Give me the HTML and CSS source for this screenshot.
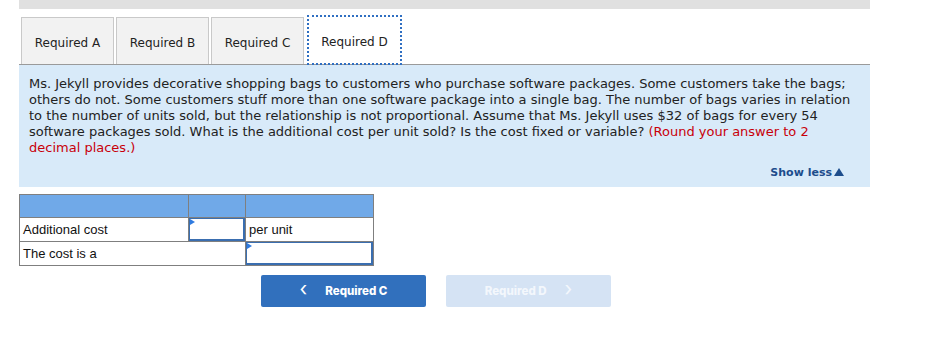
FILE: index.html
```html
<!DOCTYPE html>
<html>
<head>
<meta charset="utf-8">
<link rel="stylesheet" href="styles.css">
</head>
<body>
<div class="topbar"></div>
<div class="tabs">
  <div class="tab">Required A</div>
  <div class="tab">Required B</div>
  <div class="tab">Required C</div>
  <div class="tab active">Required D</div>
</div>
<div class="panel">
  <div class="question">
    <span class="line">Ms. Jekyll provides decorative shopping bags to customers who purchase software packages. Some customers take the bags;</span>
    <span class="line">others do not. Some customers stuff more than one software package into a single bag. The number of bags varies in relation</span>
    <span class="line">to the number of units sold, but the relationship is not proportional. Assume that Ms. Jekyll uses $32 of bags for every 54</span>
    <span class="line">software packages sold. What is the additional cost per unit sold? Is the cost fixed or variable? <span class="red">(Round your answer to 2</span></span>
    <span class="line red">decimal places.)</span>
  </div>
  <div class="showless">Show less<span class="tri"></span></div>
</div>
<table class="grid">
  <colgroup><col class="c1"><col class="c2"><col class="c3"></colgroup>
  <tr class="head"><td></td><td></td><td></td></tr>
  <tr><td>Additional cost</td><td class="inp"><div class="box"></div></td><td>per unit</td></tr>
  <tr><td colspan="2">The cost is a</td><td class="inp"><div class="box"></div></td></tr>
</table>
<div class="nav">
  <button class="btn prev"><span class="chev">&lsaquo;</span>Required C</button>
  <button class="btn next">Required D<span class="chev r">&rsaquo;</span></button>
</div>
</body>
</html>
```
FILE: styles.css
```css
body {
  margin: 0;
  background: #fff;
  font-family: "DejaVu Sans", Verdana, sans-serif;
  color: #222;
}
.topbar {
  margin-left: 19px;
  width: 851px;
  height: 9px;
  background: #e0e0e0;
}
.tabs {
  display: flex;
  margin: 8px 0 0 19px;
  width: 849px;
  padding-left: 2px;
  border-bottom: 1px solid #9a9a9a;
  height: 47px;
}
.tab {
  width: 93px;
  height: 47px;
  box-sizing: border-box;
  border: 1px solid #c9c9c9;
  border-bottom: none;
  background: #f2f2f2;
  margin-right: 2px;
  display: flex;
  align-items: center;
  justify-content: center;
  padding-top: 3px;
  font-size: 12px;
  color: #222;
}
.tab.active {
  background: #fff;
  border: none;
  width: 91px;
  height: 46px;
  margin-left: 3px;
  padding-top: 4px;
  outline: 2px dotted #2f6fc2;
  outline-offset: 0;
}
.panel {
  margin-left: 19px;
  width: 851px;
  height: 122px;
  background: #d8eaf9;
  box-sizing: border-box;
  padding: 11px 10px 0 10px;
}
.question {
  margin: 0;
  font-size: 13px;
  line-height: 16px;
  color: #222;
}
.line {
  display: block;
  white-space: nowrap;
}
.red { color: #c8000a; }
.showless {
  text-align: right;
  margin-top: 10px;
  padding-right: 16px;
  font-size: 11px;
  font-weight: bold;
  color: #1d4d8c;
}
.tri {
  display: inline-block;
  width: 0;
  height: 0;
  margin-left: 2px;
  border-left: 5px solid transparent;
  border-right: 5px solid transparent;
  border-bottom: 8px solid #1d4d8c;
}
.grid {
  margin: 7px 0 0 19px;
  border-collapse: collapse;
  font-family: "Liberation Sans", Arial, sans-serif;
  font-size: 13px;
  color: #111;
  table-layout: fixed;
  width: 354px;
}
.c1 { width: 169px; }
.c2 { width: 57px; }
.c3 { width: 128px; }
.grid td {
  border: 1px solid #7f7f7f;
  height: 23px;
  padding: 0 3px;
  box-sizing: border-box;
}
.grid .head td {
  background: #70a9e8;
}
.grid td.inp {
  padding: 0;
}
.box {
  height: 20px;
  border-style: solid;
  border-width: 1px 2px 2px 1px;
  border-color: #3a6eb0;
  background: #fff;
  position: relative;
}
.box::before {
  content: "";
  position: absolute;
  left: 0;
  top: 0;
  border-left: 5px solid #2f7be0;
  border-top: 3px solid transparent;
  border-bottom: 3px solid transparent;
}
.nav {
  display: flex;
  gap: 20px;
  margin: 9px 0 0 261px;
}
.btn {
  width: 165px;
  height: 32px;
  border: none;
  border-radius: 2px;
  font-family: Inter, "DejaVu Sans", sans-serif;
  font-weight: 800;
  font-size: 11.5px;
  color: #fff;
  display: flex;
  align-items: center;
  justify-content: center;
  padding: 0;
}
.prev { background: #3170bd; }
.next { background: #d5e3f4; color: #f3f7fc; }
.chev {
  font-size: 20px;
  font-weight: 400;
  margin-right: 18px;
  line-height: 1;
  position: relative;
  top: -2px;
}
.chev.r { margin: 0 0 0 18px; }
```
